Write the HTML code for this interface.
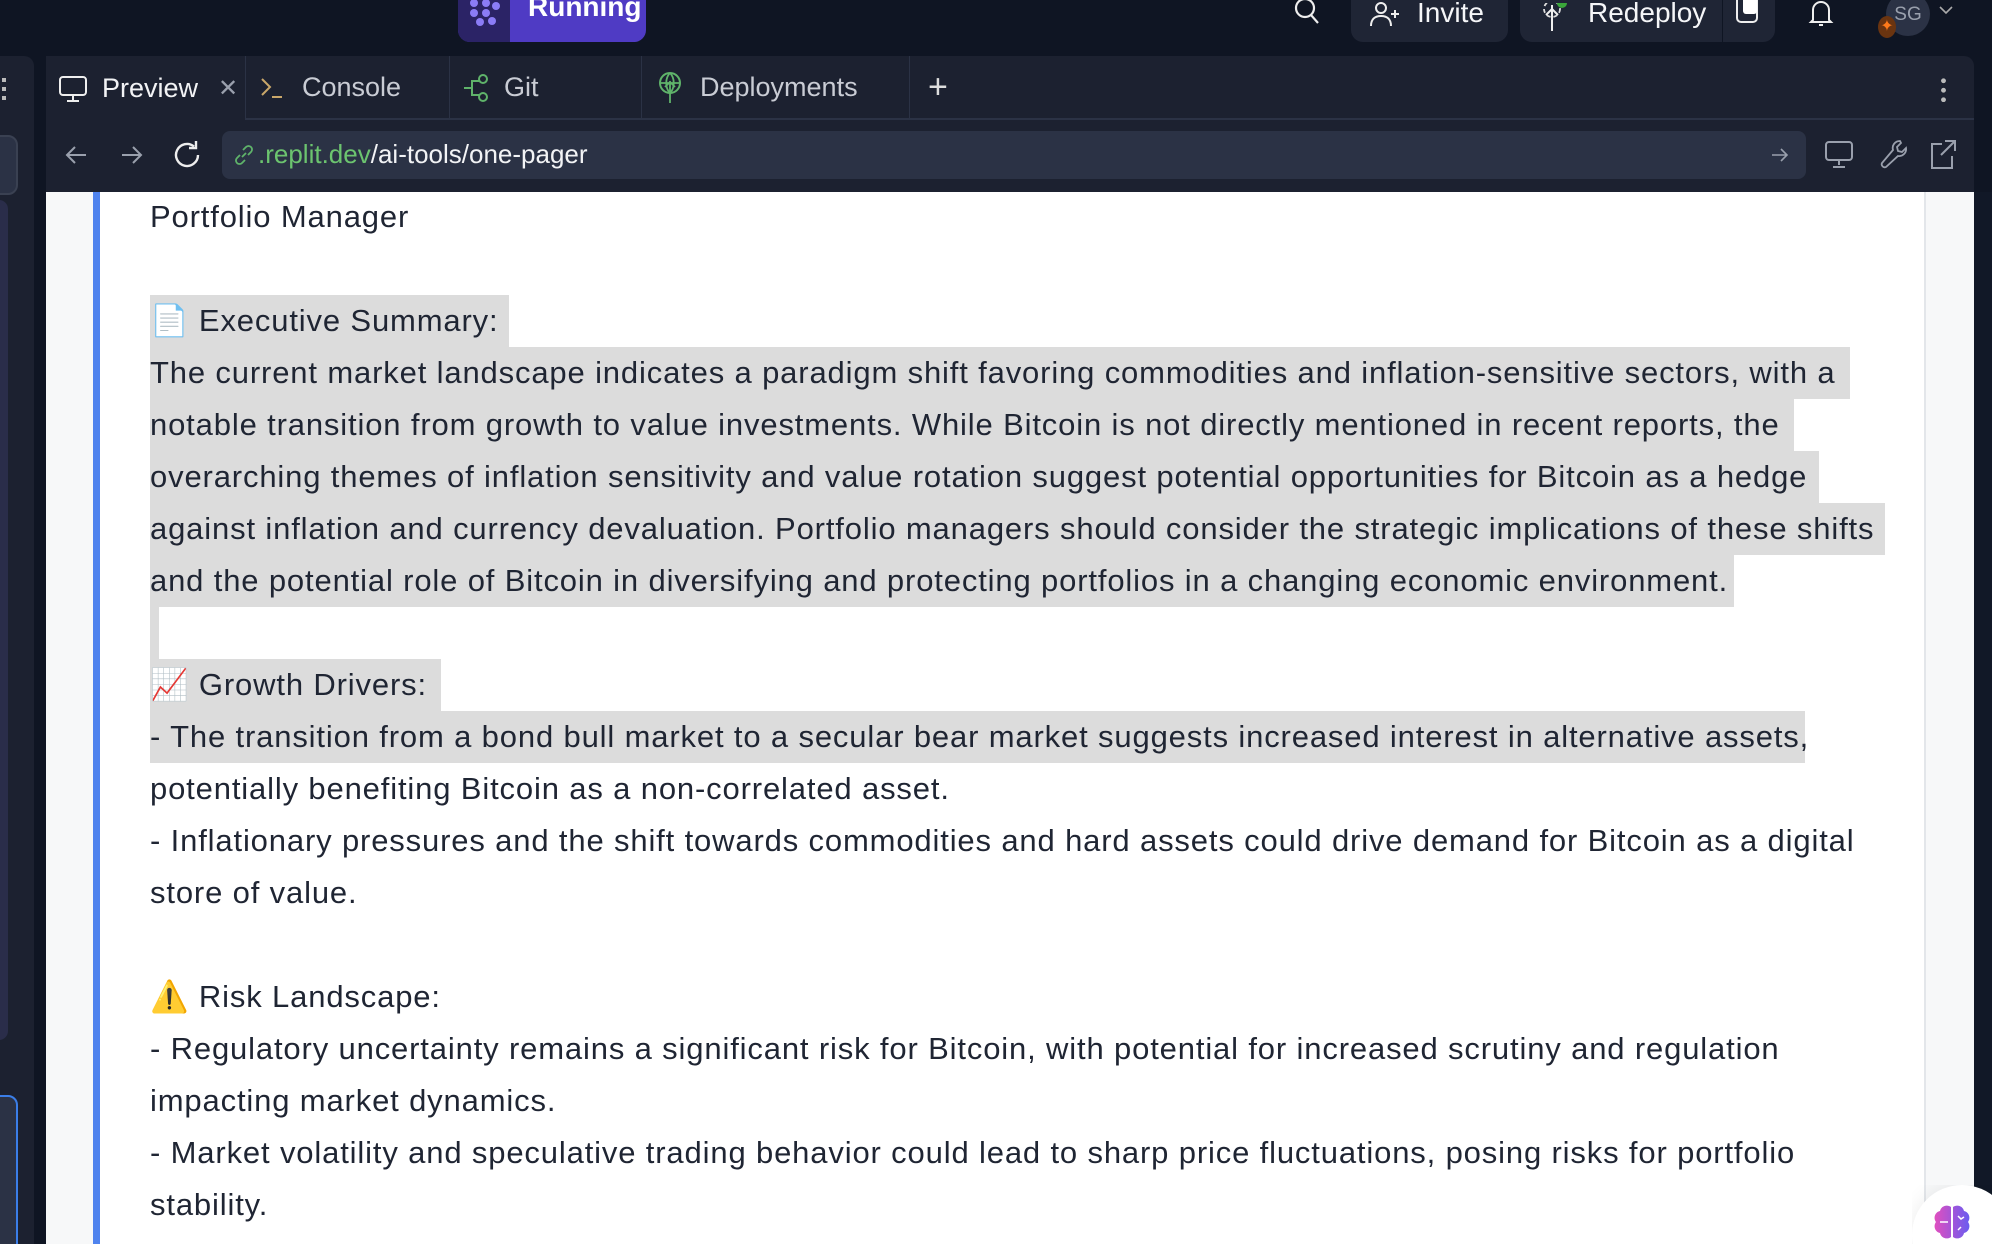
<!DOCTYPE html>
<html style="width:1992px;height:1244px;overflow:hidden"><head><meta charset="utf-8">
<style>
*{margin:0;padding:0;box-sizing:border-box}
body{width:1992px;height:1244px;overflow:hidden;background:#0f1523;font-family:"Liberation Sans",sans-serif;position:relative}
.abs{position:absolute}
.btn{position:absolute;top:0;height:42px;background:#1f2535;border-radius:0 0 12px 12px;color:#f5f6f8;font-size:28px;display:flex;align-items:center}
.tabbar{position:absolute;left:46px;top:56px;width:1928px;height:64px;background:#1c2130;border-radius:10px 10px 0 0;border-bottom:2px solid #2b3245}
.tab{position:absolute;top:0;height:63px;border-right:1px solid #2b3245;display:flex;align-items:center;color:#c9ccd4;font-size:27px}
.addr{position:absolute;left:46px;top:120px;width:1928px;height:72px;background:#1c2130}
.content{position:absolute;left:46px;top:192px;width:1928px;height:1052px;background:#f7f8f9}
.page{position:absolute;left:100px;top:192px;width:1826px;height:1052px;background:#fff;border-right:2px solid #e3e6ea}
.txt{position:absolute;left:150px;top:191px;font-size:31px;letter-spacing:0.85px;color:#1f2533;white-space:nowrap}
.l{height:52px;line-height:52px}
.h{display:inline-block;background:#dcdcdc;height:52px}
</style></head><body>
<div class="abs" style="left:458px;top:0;width:188px;height:42px;border-radius:0 0 12px 12px;background:#4f3bc4;overflow:hidden">
 <div class="abs" style="left:0;top:0;width:52px;height:42px;background:#2b2366"></div>
 <svg class="abs" style="left:10px;top:0" width="34" height="26" viewBox="0 0 34 26"><g fill="#8b7cf6"><circle cx="6" cy="3" r="4"/><circle cx="18" cy="3" r="4"/><circle cx="28" cy="6" r="4"/><circle cx="6" cy="13" r="4"/><circle cx="18" cy="13" r="4"/><circle cx="12" cy="22" r="4"/><circle cx="24" cy="21" r="4"/></g></svg>
 <div class="abs" style="left:70px;top:-9px;color:#fff;font-weight:bold;font-size:28px">Running</div>
</div>
<svg class="abs" style="left:1293px;top:0" width="28" height="26" viewBox="0 0 28 26"><circle cx="12" cy="8" r="9" fill="none" stroke="#eee" stroke-width="2.2"/><path d="M18 15l7 8" stroke="#eee" stroke-width="2.2"/></svg>
<div class="btn" style="left:1351px;width:157px"><svg style="margin-left:18px;margin-top:-10px" width="34" height="28" viewBox="0 0 34 28"><circle cx="12" cy="6" r="5" fill="none" stroke="#eee" stroke-width="2"/><path d="M2 24c0-7 4-10 10-10s10 3 10 10M26 8v8M22 12h8" fill="none" stroke="#eee" stroke-width="2"/></svg><span style="margin-left:14px;margin-top:-16px">Invite</span></div>
<div class="btn" style="left:1520px;width:255px"><svg style="margin-left:18px;margin-top:-6px" width="34" height="30" viewBox="0 0 34 30"><circle cx="14" cy="6" r="8" fill="none" stroke="#ddd" stroke-width="1.8" stroke-dasharray="4 3"/><path d="M14 2v26M8 12l6-6 6 6" fill="none" stroke="#eee" stroke-width="2"/><circle cx="24" cy="0" r="5" fill="#3aa63a"/></svg><span style="margin-left:16px;margin-top:-16px">Redeploy</span>
 <div class="abs" style="left:202px;top:0;width:1px;height:42px;background:#0f1523"></div>
 <svg class="abs" style="left:215px;top:0" width="26" height="24" viewBox="0 0 26 24"><rect x="2" y="-4" width="20" height="26" rx="4" fill="none" stroke="#eee" stroke-width="2"/><rect x="8" y="-4" width="14" height="18" rx="3" fill="#fff"/></svg>
</div>
<svg class="abs" style="left:1808px;top:0" width="26" height="28" viewBox="0 0 26 28"><path d="M5 20V10a8 8 0 0 1 16 0v10l2 2H3z" fill="none" stroke="#eee" stroke-width="2"/><path d="M11 25h4" stroke="#eee" stroke-width="2"/></svg>
<div class="abs" style="left:1886px;top:-8px;width:44px;height:44px;border-radius:50%;background:#2b3245;color:#9aa0ad;font-size:19px;text-align:center;line-height:46px">SG</div>
<div class="abs" style="left:1878px;top:16px;width:18px;height:22px;border-radius:50%;background:#6a3410;color:#ff7a1a;font-size:16px;text-align:center;line-height:22px">✦</div>
<svg class="abs" style="left:1938px;top:4px" width="16" height="12" viewBox="0 0 16 12"><path d="M2 3l6 6 6-6" fill="none" stroke="#aaa" stroke-width="1.6"/></svg>

<div class="abs" style="left:0;top:56px;width:34px;height:1188px;background:#1c2130;border-radius:0 10px 0 0"></div>
<div class="abs" style="left:2px;top:78px;width:4px;height:22px;background:repeating-linear-gradient(#bbb 0 4px,transparent 4px 9px)"></div>
<div class="abs" style="left:-10px;top:135px;width:28px;height:60px;border:2px solid #3a4152;border-radius:10px;background:#2b3245"></div>
<div class="abs" style="left:-10px;top:200px;width:18px;height:840px;background:#2a2d4a;border-radius:10px"></div>
<div class="abs" style="left:-10px;top:1095px;width:28px;height:160px;border:2px solid #3b7ee8;border-radius:10px;background:#2b3245"></div>

<div class="tabbar">
 <div class="tab" style="left:0;width:200px;height:65px;background:#1c2130">
  <svg style="margin-left:12px" width="30" height="28" viewBox="0 0 30 28"><rect x="2" y="2" width="26" height="18" rx="3" fill="none" stroke="#eee" stroke-width="2"/><path d="M15 20v5M9 26h12" stroke="#eee" stroke-width="2"/></svg>
  <span style="margin-left:14px;color:#f2f3f5">Preview</span>
  <span style="margin-left:20px;color:#9aa0ad;font-size:24px">✕</span>
 </div>
 <div class="tab" style="left:200px;width:204px"><svg style="margin-left:14px" width="26" height="24" viewBox="0 0 26 24"><path d="M2 3l8 8-8 8" fill="none" stroke="#c9a76a" stroke-width="2"/><path d="M12 21h10" stroke="#c9a76a" stroke-width="2"/></svg><span style="margin-left:16px">Console</span></div>
 <div class="tab" style="left:404px;width:192px"><svg style="margin-left:12px" width="30" height="30" viewBox="0 0 30 30"><path d="M2 15h8" stroke="#5fb36a" stroke-width="2"/><circle cx="21" cy="6" r="4" fill="none" stroke="#5fb36a" stroke-width="2"/><circle cx="21" cy="24" r="4" fill="none" stroke="#5fb36a" stroke-width="2"/><path d="M10 15V8h7M10 15v7h7" fill="none" stroke="#5fb36a" stroke-width="2"/></svg><span style="margin-left:12px">Git</span></div>
 <div class="tab" style="left:596px;width:268px"><svg style="margin-left:14px" width="28" height="34" viewBox="0 0 28 34"><circle cx="14" cy="12" r="10" fill="none" stroke="#5fb36a" stroke-width="2"/><path d="M4 12h20M14 2c-5 5-5 15 0 20M14 2c5 5 5 15 0 20M14 10v22M9 16l5-5 5 5" fill="none" stroke="#5fb36a" stroke-width="1.8"/></svg><span style="margin-left:16px">Deployments</span></div>
 <div class="abs" style="left:882px;top:12px;color:#ddd;font-size:34px">+</div>
 <div class="abs" style="left:1895px;top:20px;width:5px;height:26px;background:radial-gradient(circle,#bbb 2.2px,transparent 2.6px) 0 0/5px 9.5px repeat-y"></div>
</div>

<div class="addr">
 <svg class="abs" style="left:18px;top:22px" width="26" height="26" viewBox="0 0 26 26"><path d="M22 13H4M11 5l-8 8 8 8" fill="none" stroke="#9aa0ad" stroke-width="2"/></svg>
 <svg class="abs" style="left:72px;top:22px" width="26" height="26" viewBox="0 0 26 26"><path d="M4 13h18M15 5l8 8-8 8" fill="none" stroke="#9aa0ad" stroke-width="2"/></svg>
 <svg class="abs" style="left:126px;top:19px" width="32" height="32" viewBox="0 0 32 32"><path d="M26 16a11 11 0 1 1-4-8.5" fill="none" stroke="#eee" stroke-width="2.4"/><path d="M24 2v7h-7" fill="none" stroke="#eee" stroke-width="2.4"/></svg>
 <div class="abs" style="left:176px;top:11px;width:1584px;height:48px;background:#2b3245;border-radius:8px">
  <svg class="abs" style="left:10px;top:12px" width="24" height="24" viewBox="0 0 24 24"><path d="M10 14l4-4M8 12l-3 3a3.5 3.5 0 0 0 5 5l3-3M16 12l3-3a3.5 3.5 0 0 0-5-5l-3 3" fill="none" stroke="#5fb36a" stroke-width="1.8"/></svg>
  <div class="abs" style="left:36px;top:8px;font-size:26px;color:#f2f3f5"><span style="color:#6cc46f">.replit.dev</span>/ai-tools/one-pager</div>
  <svg class="abs" style="left:1548px;top:14px" width="20" height="20" viewBox="0 0 20 20"><path d="M2 10h15M11 4l6 6-6 6" fill="none" stroke="#9aa0ad" stroke-width="1.6"/></svg>
 </div>
 <svg class="abs" style="left:1778px;top:20px" width="30" height="30" viewBox="0 0 30 30"><rect x="2" y="2" width="26" height="18" rx="3" fill="none" stroke="#9aa0ad" stroke-width="2"/><path d="M15 20v5M9 27h12" stroke="#9aa0ad" stroke-width="2"/></svg>
 <svg class="abs" style="left:1832px;top:18px" width="30" height="32" viewBox="0 0 30 32"><path d="M22 3a7 7 0 0 0-7 9L4 25a3 3 0 0 0 4 4l12-11a7 7 0 0 0 8-8l-4 4-4-1-1-4 4-4z" fill="none" stroke="#9aa0ad" stroke-width="1.8"/></svg>
 <svg class="abs" style="left:1882px;top:18px" width="30" height="32" viewBox="0 0 30 32"><path d="M14 6H4v24h20V18M17 3h10v10M27 3L13 17" fill="none" stroke="#9aa0ad" stroke-width="2"/></svg>
</div>

<div class="content"></div>
<div class="abs" style="left:93px;top:192px;width:7px;height:1052px;background:#4f83ee"></div>
<div class="page"></div>
<div class="abs" style="left:1974px;top:192px;width:18px;height:1052px;background:#111827"></div>
<div class="abs" style="left:1912px;top:1185px;width:80px;height:59px;overflow:hidden"><div style="width:100px;height:100px;border-radius:50%;background:#fff;box-shadow:0 0 20px rgba(0,0,0,.08)"></div></div>
<svg class="abs" style="left:1932px;top:1204px" width="40" height="38" viewBox="0 0 40 38"><defs><linearGradient id="g" x1="0" x2="1"><stop offset="0" stop-color="#e04fbf"/><stop offset="1" stop-color="#6a5cf0"/></linearGradient></defs><path d="M19 3c-4-3-10-1-11 4-5 1-7 7-4 11-3 4-1 10 4 11 1 5 7 7 11 4zM21 3c4-3 10-1 11 4 5 1 7 7 4 11 3 4 1 10-4 11-1 5-7 7-11 4z" fill="url(#g)"/><path d="M8 18h8M26 12l3 3 3-2M26 26l3-3" stroke="#fff" stroke-width="1.5" fill="none"/></svg>

<div class="txt">
<div class="l">Portfolio Manager</div>
<div class="l"></div>
<div class="l"><span class="h" style="width:359px">📄 Executive Summary:</span></div>
<div class="l"><span class="h" style="width:1700px">The current market landscape indicates a paradigm shift favoring commodities and inflation-sensitive sectors, with a</span></div>
<div class="l"><span class="h" style="width:1644px">notable transition from growth to value investments. While Bitcoin is not directly mentioned in recent reports, the</span></div>
<div class="l"><span class="h" style="width:1669px">overarching themes of inflation sensitivity and value rotation suggest potential opportunities for Bitcoin as a hedge</span></div>
<div class="l"><span class="h" style="width:1735px">against inflation and currency devaluation. Portfolio managers should consider the strategic implications of these shifts</span></div>
<div class="l"><span class="h" style="width:1584px">and the potential role of Bitcoin in diversifying and protecting portfolios in a changing economic environment.</span></div>
<div class="l"><span class="h" style="width:9px"></span></div>
<div class="l"><span class="h" style="width:291px">📈 Growth Drivers:</span></div>
<div class="l"><span class="h" style="width:1655px">- The transition from a bond bull market to a secular bear market suggests increased interest in alternative assets,</span></div>
<div class="l">potentially benefiting Bitcoin as a non-correlated asset.</div>
<div class="l">- Inflationary pressures and the shift towards commodities and hard assets could drive demand for Bitcoin as a digital</div>
<div class="l">store of value.</div>
<div class="l"></div>
<div class="l">⚠️ Risk Landscape:</div>
<div class="l">- Regulatory uncertainty remains a significant risk for Bitcoin, with potential for increased scrutiny and regulation</div>
<div class="l">impacting market dynamics.</div>
<div class="l">- Market volatility and speculative trading behavior could lead to sharp price fluctuations, posing risks for portfolio</div>
<div class="l">stability.</div>
</div>
</body></html>
